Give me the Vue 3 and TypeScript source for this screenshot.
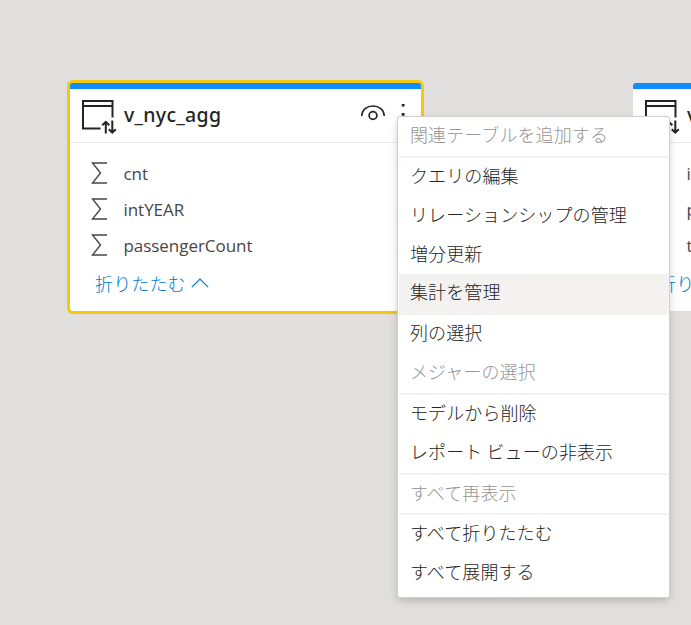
<script setup lang="ts">
interface TableCard {
  id: string
  name: string
  fields: string[]
  selected: boolean
}
interface MenuItem {
  label: string
  disabled?: boolean
  active?: boolean
}

const tables: TableCard[] = [
  { id: 'primary', name: 'v_nyc_agg', fields: ['cnt', 'intYEAR', 'passengerCount'], selected: true },
  { id: 'secondary', name: 'v_nyc', fields: ['id', 'passengerCount', 'tripYear'], selected: false },
]

const groups: MenuItem[][] = [
  [{ label: '関連テーブルを追加する', disabled: true }],
  [
    { label: 'クエリの編集' },
    { label: 'リレーションシップの管理' },
    { label: '増分更新' },
    { label: '集計を管理', active: true },
  ],
  [{ label: '列の選択' }, { label: 'メジャーの選択', disabled: true }],
  [{ label: 'モデルから削除' }, { label: 'レポート ビューの非表示' }],
  [{ label: 'すべて再表示', disabled: true }],
  [{ label: 'すべて折りたたむ' }, { label: 'すべて展開する' }],
]
</script>

<template>
  <main class="canvas">
    <section v-for="t in tables" :key="t.id" class="card" :class="[t.id, { selected: t.selected }]">
      <header class="head">
        <svg class="table-icon" width="36" height="36" viewBox="0 0 36 36" fill="none" stroke="#252423" stroke-width="2">
          <path d="M20.500 30.500H3V3H32.500V19.600M3 8H32.500" />
          <path d="M25.800 35.500V23.800M22.300 27.300L25.800 23.800L29.300 27.300M32.300 22.500V34.700M28.800 31.200L32.300 34.700L35.800 31.200" />
        </svg>
        <h2 class="name">{{ t.name }}</h2>
        <svg class="eye" width="26" height="18" viewBox="0 0 26 18" fill="none" stroke="#252423" stroke-width="1.7">
          <path d="M1.800 12C2 5.500 7 2 13 2S24 5.500 24.200 12" />
          <circle cx="13" cy="11.500" r="3.900" />
        </svg>
        <svg class="more" width="4" height="20" viewBox="0 0 4 20" fill="#252423">
          <path d="M.7 0h2.800v2.500H.7zM.7 9h2.800v2.800H.7zM.7 17h2.800v2.800H.7z" />
        </svg>
      </header>
      <ul class="fields">
        <li v-for="f in t.fields" :key="f" class="field">
          <svg class="sigma" width="18" height="22" viewBox="0 0 18 22" fill="none" stroke="#484644" stroke-width="1.4">
            <path d="M17 1H2.500L10.500 11L2.500 21H17" />
          </svg>
          <span>{{ f }}</span>
        </li>
      </ul>
      <footer class="collapse">
        <span>折りたたむ</span>
        <svg width="18" height="10" viewBox="0 0 18 10" fill="none" stroke="#0078d4" stroke-width="1.2">
          <path d="M.8 9.200L9 1L17.200 9.200" />
        </svg>
      </footer>
    </section>

    <nav class="menu">
      <ul v-for="(g, i) in groups" :key="i" class="group">
        <li v-for="m in g" :key="m.label" class="item" :class="{ disabled: m.disabled, active: m.active }">{{ m.label }}</li>
      </ul>
    </nav>
  </main>
</template>

<style>
body {
  margin: 0;
  overflow: hidden;
}
</style>

<style scoped>
.canvas {
  position: relative;
  width: 691px;
  height: 625px;
  overflow: hidden;
  background: #e1dfdd;
  font-family: "Open Sans", "Noto Sans CJK JP", sans-serif;
}
ul {
  list-style: none;
  margin: 0;
  padding: 0;
}
.card {
  position: absolute;
  top: 83px;
  box-sizing: border-box;
  width: 351px;
  height: 228px;
  background: #fff;
  border-top: 6px solid #118dff;
  border-radius: 3px;
}
.primary {
  left: 70px;
}
.secondary {
  left: 633px;
}
.selected {
  box-shadow: 0 0 0 3px #f2c811;
}
.head {
  display: flex;
  align-items: center;
  box-sizing: border-box;
  height: 54px;
  padding: 0 16px 0 10px;
  border-bottom: 1px solid #eae9e8;
}
.table-icon {
  margin-top: 1px;
  overflow: visible;
}
.name {
  flex: 1;
  margin: 0 0 2px 8px;
  font: 500 19.500px/28px "Noto Sans", sans-serif;
  letter-spacing: 0.3px;
  color: #252423;
}
.eye {
  margin: 0 15px 5px 0;
}
.more {
  margin-bottom: 3px;
}
.fields {
  padding-top: 12px;
}
.field {
  display: flex;
  align-items: center;
  gap: 15.500px;
  height: 36px;
  padding-left: 20px;
  font-size: 17px;
  letter-spacing: -0.05px;
  color: #484644;
}
.collapse {
  display: flex;
  align-items: center;
  gap: 5px;
  height: 38px;
  margin-top: 1px;
  padding-left: 25px;
  font: 300 18px/38px "Noto Sans CJK JP", sans-serif;
  letter-spacing: 0.15px;
  color: #0078d4;
}
.menu {
  position: absolute;
  left: 398px;
  top: 117px;
  box-sizing: border-box;
  width: 271px;
  height: 480px;
  background: #fff;
  border-radius: 2px;
  box-shadow: 0 0 0 1px #d2d0ce, 0 3px 9px rgba(0, 0, 0, 0.22);
}
.group + .group {
  border-top: 2px solid #f3f2f1;
}
.group {
  margin-left: 1px;
}
.item {
  height: 38.850px;
  padding-left: 11px;
  font: 300 18px/35.500px "Noto Sans CJK JP", sans-serif;
  letter-spacing: 0.1px;
  color: #252423;
  white-space: nowrap;
}
.disabled {
  color: #979593;
}
.active {
  background: #f3f2f1;
}
</style>
